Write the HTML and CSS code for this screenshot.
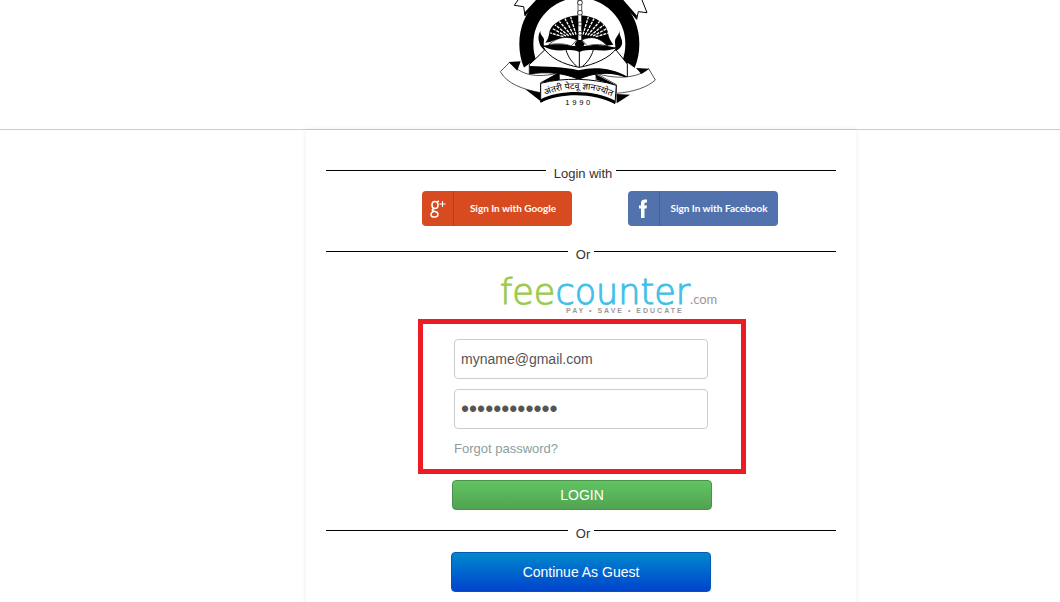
FILE: index.html
```html
<!DOCTYPE html>
<html lang="en">
<head>
    <meta charset="UTF-8">
    <meta name="viewport" content="width=device-width, initial-scale=1.0">
    <title>Login</title>
    <link rel="stylesheet" href="styles.css">
</head>
<body>
    <header class="header">
        <svg class="emblem" viewBox="0 0 540 345" role="img" aria-label="University emblem">
            <!-- top ribbon ends -->
            <g fill="#fff" stroke="#000" stroke-width="3" stroke-linejoin="round">
                <path d="M84 0 L73 16 L101 20 L105 47 L142 0"/>
                <path d="M456 0 L471 38 L445 35 L440 58 L394 0"/>
            </g>
            <path d="M105 47 L150 0 L138 0 L103 38z M440 58 L386 0 L400 0 L441 47z"/>
            <!-- ring -->
            <circle cx="268" cy="132" r="159" fill="#fff" stroke="#000" stroke-width="42"/>
            <path d="M70 226 L120 190 L268 215 L415 190 L465 226 L420 330 L120 330z" fill="#fff"/>
            <!-- rays -->
            <path d="M166 128 C174 118 176 110 178 98 C182 72 222 48 268 46 C316 48 350 70 354 98 C356 112 360 120 370 134 L344 138 C320 112 294 110 268 124 C240 110 206 112 180 126z"/>
            <g stroke="#fff" stroke-width="4" stroke-dasharray="9 3">
                <path d="M258 104 L242 51 M251 105 L225 56 M244 106 L208 64 M236 107 L195 74 M228 108 L188 86 M220 110 L181 99"/>
                <path d="M279 104 L295 51 M286 105 L312 56 M293 106 L329 64 M301 107 L342 74 M309 108 L350 86 M317 110 L356 99"/>
            </g>
            <!-- torch -->
            <path d="M264 0h11v122h-11z" fill="#fff" stroke="#000" stroke-width="2"/>
            <g fill="#fff" stroke="#000" stroke-width="2">
                <circle cx="270" cy="8" r="7"/>
                <circle cx="270" cy="38" r="7"/>
                <circle cx="270" cy="72" r="6"/>
                <circle cx="270" cy="100" r="6"/>
            </g>
            <!-- flames -->
            <path d="M151 92 C144 106 144 116 148 128 C150 138 156 142 162 150 L170 154 C158 138 162 128 162 118 C160 108 150 106 151 92z M389 92 C386 108 376 110 375 124 C374 136 380 140 372 154 C390 148 398 138 396 122 C394 112 388 106 389 92z"/>
            <!-- lower book -->
            <path d="M164 150 L118 194 L118 222 C166 214 222 218 266 238 C308 218 360 212 412 232 L412 192 L378 150z" fill="#fff" stroke="#000" stroke-width="3"/>
            <path d="M120 198 C170 200 220 200 266 211 C310 200 362 202 412 230 L412 234 C360 212 310 220 266 238 C222 218 166 214 120 222z"/>
            <!-- bowl -->
            <path d="M158 138 C176 174 222 194 268 202 C312 194 360 174 380 144 C320 146 210 146 158 138z" fill="#fff" stroke="#000" stroke-width="3"/>
            <path d="M158 138 C190 130 226 132 246 138 L290 138 C312 132 346 134 380 144 C354 154 332 152 310 150 C296 150 282 150 268 156 C256 150 242 150 228 150 C206 154 180 150 158 138z"/>
            <path d="M176 134 C206 108 236 108 260 120 L244 138 C222 130 200 130 176 134z M276 120 C300 108 328 110 352 138 C330 132 310 132 292 138z" fill="#fff" stroke="#000" stroke-width="2"/>
            <path d="M254 132 L262 120 L274 120 L284 132 L278 142 L258 142z"/>
            <path d="M228 150 C234 170 246 188 260 198 M268 152 V202 M310 150 C304 170 292 188 278 198" fill="none" stroke="#000" stroke-width="3"/>
            <!-- ribbon -->
            <path d="M60 186 C90 226 142 236 208 218 L152 248 C152 264 152 274 152 278 C98 268 52 252 31 215z" fill="#fff" stroke="#000" stroke-width="2"/>
            <path d="M476 206 C440 236 378 238 318 220 L379 254 L379 280 C430 276 472 262 496 240z" fill="#fff" stroke="#000" stroke-width="2"/>
            <path d="M56 186 L92 184 L82 212z M478 206 L438 204 L454 222z M106 268 L152 278 L152 304z M379 282 L420 284 L380 310z"/>
            <path d="M152 248 L208 216 L208 240z M379 256 L316 222 L320 240z"/>
            <path d="M208 218 V240 M318 220 V240" stroke="#000" stroke-width="2"/>
            <path d="M152 250 C220 232 310 234 379 256 L375 310 C310 274 218 268 152 306z" fill="#fff" stroke="#000" stroke-width="3"/>
            <path d="M152 298 C214 266 318 270 376 302 L375 312 C314 280 218 276 152 308z"/>
            <path id="motto-line" d="M166 286 C226 260 300 260 362 288" fill="none"/>
            <text class="motto"><textPath href="#motto-line">अंतरी पेटवू ज्ञानज्योत</textPath></text>
            <text class="year" x="226" y="315">1990</text>
        </svg>
    </header>

    <main class="page">
        <div class="card">
            <div class="divider"><span>Login with</span></div>
            <div class="social">
                <button type="button" class="social-btn google">
                    <span class="social-icon">
                        <svg width="18" height="22" viewBox="0 0 18 22" fill="none" stroke="#fff">
                            <ellipse cx="6" cy="7" rx="3" ry="3.500" stroke-width="1.6"/>
                            <path d="M8 4 L10 3 M5 10.500 C2 12 3 13 6 13.500 C10 14 10 19 5.500 19 C1 19 1 15 4.500 13.500" stroke-width="1.5"/>
                            <path d="M13.500 3 V9 M10.500 6 H16.500"/>
                        </svg>
                    </span>
                    <span class="social-text">Sign In with Google</span>
                </button>
                <button type="button" class="social-btn facebook">
                    <span class="social-icon">
                        <svg width="12" height="22" viewBox="0 0 12 22" fill="#fff">
                            <path d="M3 20 V10.500 H1 V7.500 H3 V5 C3 2 5 1 9 1.500 V4.500 C7 4.500 6.500 4.500 6.500 6 V7.500 H9 L8.500 10.500 H6.500 V20z"/>
                        </svg>
                    </span>
                    <span class="social-text">Sign In with Facebook</span>
                </button>
            </div>

            <div class="divider divider-or"><span>Or</span></div>

            <div class="logo">
                <div class="logo-name"><span class="logo-fee">fee</span><span class="logo-counter">counter</span><span class="logo-com">.com</span></div>
                <div class="logo-tag">PAY • SAVE • EDUCATE</div>
            </div>

            <form class="login">
                <div class="highlight">
                    <input type="email" class="field" aria-label="Email" value="myname@gmail.com">
                    <input type="password" class="field field-password" aria-label="Password" value="mypassword12">
                    <a href="#" class="forgot">Forgot password?</a>
                </div>
                <button type="submit" class="btn btn-login">LOGIN</button>
            </form>

            <div class="divider divider-guest"><span>Or</span></div>
            <button type="button" class="btn btn-guest">Continue As Guest</button>
        </div>
    </main>
</body>
</html>
```
FILE: styles.css
```css
* {
    box-sizing: border-box;
}
body {
    margin: 0;
    font-family: "Liberation Sans", Arial, sans-serif;
    font-size: 13px;
    line-height: 20px;
    color: #333;
    background: #fff;
}
.header {
    height: 130px;
    padding-left: 100px;
    border-bottom: 1px solid #ccc;
    text-align: center;
}
.emblem {
    width: 180px;
    height: 115px;
}
.motto {
    font-family: "Noto Sans", "Noto Sans Devanagari", sans-serif;
    font-size: 27px;
}
.year {
    font-family: "Liberation Sans", Arial, sans-serif;
    font-size: 23px;
    letter-spacing: 8px;
}
.page {
    padding-left: 102px;
}
.card {
    max-width: 550px;
    margin: 0 auto;
    padding: 34px 20px 30px;
    background: #fff;
    box-shadow: 0 0 6px rgba(0, 0, 0, 0.08);
}

/* lines with a caption in the middle */
.divider {
    display: flex;
}
.divider::before,
.divider::after {
    content: "";
    flex: 1;
    height: 1px;
    margin-top: 6px;
    background: #000;
}
.divider span {
    padding: 0 4px 0 8px;
}
.divider-or {
    margin-top: 19px;
}
.divider-guest {
    margin: 14px 0 8px;
}

.social {
    display: flex;
    justify-content: center;
    gap: 56px;
    margin-top: 7px;
    padding-left: 38px;
}
.social-btn {
    display: flex;
    align-items: center;
    width: 150px;
    height: 35px;
    padding: 0;
    border: none;
    border-radius: 4px;
    color: #fff;
    font-family: Lato, sans-serif;
    font-size: 10px;
    font-weight: bold;
    cursor: pointer;
}
.social-icon {
    display: flex;
    align-items: center;
    justify-content: center;
    width: 32px;
    height: 35px;
    border-right: 1px solid rgba(0, 0, 0, 0.15);
}
.social-text {
    flex: 1;
    padding-bottom: 2px;
    white-space: nowrap;
}
.google {
    background: #d84a1f;
}
.facebook {
    background: #5272ae;
}

.logo {
    width: 216px;
    margin: 8px auto 0;
    position: relative;
    left: 27px;
}
.logo-name {
    height: 34px;
    font-family: "DejaVu Sans", sans-serif;
    font-size: 35px;
    font-weight: 200;
    line-height: 38px;
    white-space: nowrap;
}
.logo-fee {
    color: #9bcb4b;
    -webkit-text-stroke: 1px #9bcb4b;
}
.logo-counter {
    color: #3fc0ea;
    -webkit-text-stroke: 1px #3fc0ea;
}
.logo-com {
    color: #999;
    font-family: Lato, sans-serif;
    font-size: 13px;
    font-weight: normal;
}
.logo-tag {
    padding-left: 66px;
    font-size: 7px;
    font-weight: bold;
    line-height: 8px;
    letter-spacing: 2px;
    color: #999;
    white-space: nowrap;
}

.login {
    max-width: 330px;
    margin: 4px auto 0;
    padding-left: 2px;
}
.highlight {
    height: 155px;
    padding: 15px 33px 0 31px;
    border: 5px solid #eb1c24;
}
.field {
    display: block;
    width: 100%;
    height: 40px;
    margin-bottom: 10px;
    padding: 0 6px;
    border: 1px solid #ccc;
    border-radius: 4px;
    font-family: inherit;
    font-size: 14px;
    color: #555;
    background: #fff;
}
.field-password {
    font-size: 23px;
}
.forgot {
    color: #8a9ea0;
    text-decoration: none;
}
.btn {
    display: block;
    width: 260px;
    border-radius: 4px;
    color: #fff;
    font-family: inherit;
    font-size: 14px;
    cursor: pointer;
}
.btn-login {
    height: 30px;
    margin: 6px auto 0;
    border: 1px solid #499249;
    background: linear-gradient(#62c462, #51a351);
}
.btn-guest {
    height: 40px;
    margin: 0 auto;
    border: 1px solid #0058b0;
    background: linear-gradient(#0088cc, #0044cc);
}
```
